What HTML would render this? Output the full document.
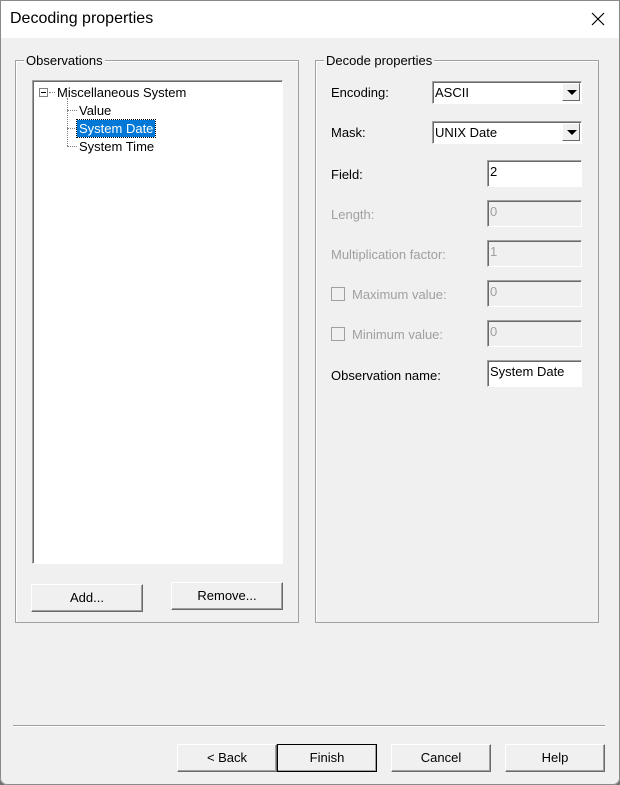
<!DOCTYPE html><html><head><style>
*{box-sizing:border-box}
body{margin:0;width:620px;height:785px;background:#6e6e6e;font-family:"Liberation Sans",sans-serif;font-size:13px;color:#000;overflow:hidden}
.win{position:absolute;left:0;top:0;width:620px;height:785px;background:#f0f0f0;border-radius:0 0 7px 7px;overflow:hidden}
.frame{position:absolute;left:0;top:0;width:620px;height:785px;border:1px solid #8a8a8a;border-radius:0 0 7px 7px;pointer-events:none}
.title{position:absolute;left:0;top:0;width:620px;height:38px;background:#fff;font-size:16px;padding:10px 0 0 10px}
.a{position:absolute}
.grp{position:absolute;border:1px solid #a0a0a0;box-shadow:1px 1px 0 #fff inset}
.lg{position:absolute;background:#f0f0f0;padding:0 2px;top:-8px;left:8px}
.sunk{position:absolute;background:#fff;border:1px solid;border-color:#a0a0a0 #fff #fff #a0a0a0;box-shadow:inset 1px 1px 0 #696969}
.dis{background:#f0f0f0;color:#a0a0a0}
.sunk span{position:absolute;left:2px;top:3px}
.btn{position:absolute;background:#f0f0f0;border:1px solid;border-color:#fff #696969 #696969 #fff;box-shadow:inset -1px -1px 0 #a0a0a0;text-align:center;line-height:25px}
.dd{position:absolute;right:1px;top:1px;width:18px;height:18px;background:#f0f0f0;border:1px solid;border-color:#fff #696969 #696969 #fff}
.dd:after{content:"";position:absolute;left:4px;top:6px;border-left:5px solid transparent;border-right:5px solid transparent;border-top:5px solid #000}
.lbl{position:absolute;left:331px}
.g{color:#a0a0a0}
.cb{position:absolute;left:331px;width:14px;height:14px;border:1px solid #a0a0a0;background:#f0f0f0}
</style></head><body><div class="win">
<div class="title">Decoding properties<svg class="a" style="left:591px;top:12px" width="14" height="14"><path d="M1 1L13 13M13 1L1 13" stroke="#000" stroke-width="1.2"/></svg></div>
<div class="grp" style="left:15px;top:60px;width:284px;height:563px"><span class="lg">Observations</span></div>
<div class="sunk" style="left:32px;top:80px;width:251px;height:484px">
<div class="a" style="left:6px;top:7px;width:9px;height:9px;border:1px solid #808080;background:#fff"></div>
<div class="a" style="left:8px;top:11px;width:5px;border-top:1px solid #000"></div>
<div class="a" style="left:16px;top:11px;width:6px;border-top:1px dotted #808080"></div>
<div class="a" style="left:34px;top:17px;height:48px;border-left:1px dotted #808080"></div>
<div class="a" style="left:34px;top:29px;width:10px;border-top:1px dotted #808080"></div>
<div class="a" style="left:34px;top:47px;width:10px;border-top:1px dotted #808080"></div>
<div class="a" style="left:34px;top:65px;width:10px;border-top:1px dotted #808080"></div>
<div class="a" style="left:24px;top:4px">Miscellaneous System</div>
<div class="a" style="left:46px;top:22px">Value</div>
<div class="a" style="left:44px;top:39px;background:#0078d7;color:#fff;padding:1px 2px;outline:1px dotted #000">System Date</div>
<div class="a" style="left:46px;top:58px">System Time</div>
</div>
<div class="btn" style="left:31px;top:584px;width:112px;height:28px">Add...</div>
<div class="btn" style="left:171px;top:582px;width:112px;height:28px">Remove...</div>
<div class="grp" style="left:315px;top:60px;width:284px;height:563px"><span class="lg">Decode properties</span></div>
<div class="lbl" style="top:85px">Encoding:</div>
<div class="sunk" style="left:432px;top:81px;width:150px;height:23px"><span>ASCII</span><div class="dd"></div></div>
<div class="lbl" style="top:125px">Mask:</div>
<div class="sunk" style="left:432px;top:121px;width:150px;height:23px"><span>UNIX Date</span><div class="dd"></div></div>
<div class="lbl" style="top:167px">Field:</div>
<div class="sunk" style="left:487px;top:160px;width:95px;height:27px"><span>2</span></div>
<div class="lbl g" style="top:207px">Length:</div>
<div class="sunk dis" style="left:487px;top:200px;width:95px;height:27px"><span>0</span></div>
<div class="lbl g" style="top:247px">Multiplication factor:</div>
<div class="sunk dis" style="left:487px;top:240px;width:95px;height:27px"><span>1</span></div>
<div class="cb" style="top:287px"></div><div class="lbl g" style="left:352px;top:287px">Maximum value:</div>
<div class="sunk dis" style="left:487px;top:280px;width:95px;height:27px"><span>0</span></div>
<div class="cb" style="top:327px"></div><div class="lbl g" style="left:352px;top:327px">Minimum value:</div>
<div class="sunk dis" style="left:487px;top:320px;width:95px;height:27px"><span>0</span></div>
<div class="lbl" style="top:368px">Observation name:</div>
<div class="sunk" style="left:487px;top:360px;width:95px;height:27px"><span>System Date</span></div>
<div class="a" style="left:13px;top:725px;width:592px;border-top:1px solid #a0a0a0;border-bottom:1px solid #fff"></div>
<div class="btn" style="left:177px;top:744px;width:100px;height:28px">&lt; Back</div>
<div class="btn" style="left:277px;top:744px;width:100px;height:28px;border:1px solid #000">Finish</div>
<div class="btn" style="left:391px;top:744px;width:100px;height:28px">Cancel</div>
<div class="btn" style="left:505px;top:744px;width:100px;height:28px">Help</div>
<div class="frame"></div>
</div></body></html>
